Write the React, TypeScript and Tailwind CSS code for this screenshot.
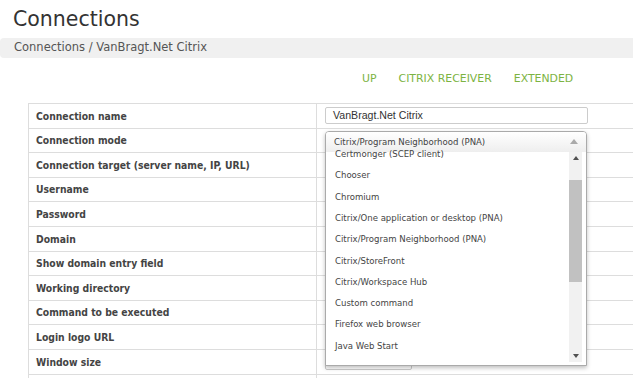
import { useState } from 'react'

const FONT = "font-['DejaVu_Sans',Verdana,sans-serif]"
const COND = "font-['DejaVu_Sans_Condensed','DejaVu_Sans',Tahoma,sans-serif]"

const rows = [
  'Connection name',
  'Connection mode',
  'Connection target (server name, IP, URL)',
  'Username',
  'Password',
  'Domain',
  'Show domain entry field',
  'Working directory',
  'Command to be executed',
  'Login logo URL',
  'Window size',
  '',
]

const modes = [
  'Certmonger (SCEP client)',
  'Chooser',
  'Chromium',
  'Citrix/One application or desktop (PNA)',
  'Citrix/Program Neighborhood (PNA)',
  'Citrix/StoreFront',
  'Citrix/Workspace Hub',
  'Custom command',
  'Firefox web browser',
  'Java Web Start',
]

function ModeDropdown() {
  const [selected, setSelected] = useState('Citrix/Program Neighborhood (PNA)')
  return (
    <div className={`absolute left-[8px] top-[2px] z-10 w-[262px] h-[235px] bg-white border border-[#aaa] rounded-t-[4px] shadow-[0_2px_4px_rgba(0,0,0,0.25)] flex flex-col overflow-hidden ${COND}`}>
      <div className="h-[20px] shrink-0 flex items-center justify-between pl-[8px] pr-[8px] bg-gradient-to-b from-white to-[#eee] text-[9.5px] text-[#444]">
        <span className="pt-[1px]">{selected}</span>
        <span className="w-0 h-0 border-x-[4px] border-x-transparent border-b-[5px] border-b-[#aaa]" />
      </div>
      <div className="flex-1 flex min-h-0 pr-[4px]">
        <ul className="flex-1 overflow-hidden -mt-[8px]">
          {modes.map(m => (
            <li
              key={m}
              onClick={() => setSelected(m)}
              className="h-[21.3px] flex items-center pl-[9px] text-[9.5px] text-[#444] cursor-pointer"
            >
              {m}
            </li>
          ))}
        </ul>
        <div className="w-[13px] shrink-0 bg-[#f1f1f1] flex flex-col items-center mb-[3px]">
          <div className="h-[12px] flex items-center">
            <span className="w-0 h-0 border-x-[3.5px] border-x-transparent border-b-[4px] border-b-[#505050]" />
          </div>
          <div className="w-full h-[102px] mt-[16px] bg-[#c1c1c1]" />
          <div className="flex-1" />
          <div className="h-[12px] flex items-center">
            <span className="w-0 h-0 border-x-[3.5px] border-x-transparent border-t-[4px] border-t-[#505050]" />
          </div>
        </div>
      </div>
    </div>
  )
}

export default function App() {
  return (
    <div className={`w-[633px] h-[378px] overflow-hidden bg-white ${FONT}`}>
      <h1 className="pl-[13px] pt-[5px] h-[38px] text-[20.5px] leading-[28px] text-[#333]">Connections</h1>
      <div className="h-[20px] bg-[#f0f0f0] rounded-l-[4px] pl-[14px] flex items-center text-[11.5px] text-[#555]">
        Connections / VanBragt.Net Citrix
      </div>
      <div className="h-[45px] flex items-center gap-[22px] pl-[362px] pb-[3px] text-[10.9px] text-[#7cb342]">
        <span>UP</span>
        <span>CITRIX RECEIVER</span>
        <span>EXTENDED</span>
      </div>
      <div className="ml-[28px] w-[640px] border-t border-l border-[#ddd]">
        {rows.map((label, i) => (
          <div key={i} className="h-[24.6px] flex border-b border-[#ddd]">
            <div className={`w-[288px] shrink-0 border-r border-[#ddd] pl-[7px] pt-[1px] flex items-center text-[10.3px] font-bold text-[#444] ${COND}`}>
              {label}
            </div>
            <div className="relative flex-1 pl-[8px] flex items-center">
              {i === 0 && (
                <div className="w-[263px] h-[17px] border border-[#ccc] rounded-[2px] px-[7px] flex items-center font-['Liberation_Sans',Arial,sans-serif] text-[10.6px] text-[#333]">
                  VanBragt.Net Citrix
                </div>
              )}
              {i === 1 && <ModeDropdown />}
              {i >= 10 && <div className="w-[87px] h-[17px] border border-[#ccc] rounded-[2px]" />}
            </div>
          </div>
        ))}
      </div>
    </div>
  )
}
